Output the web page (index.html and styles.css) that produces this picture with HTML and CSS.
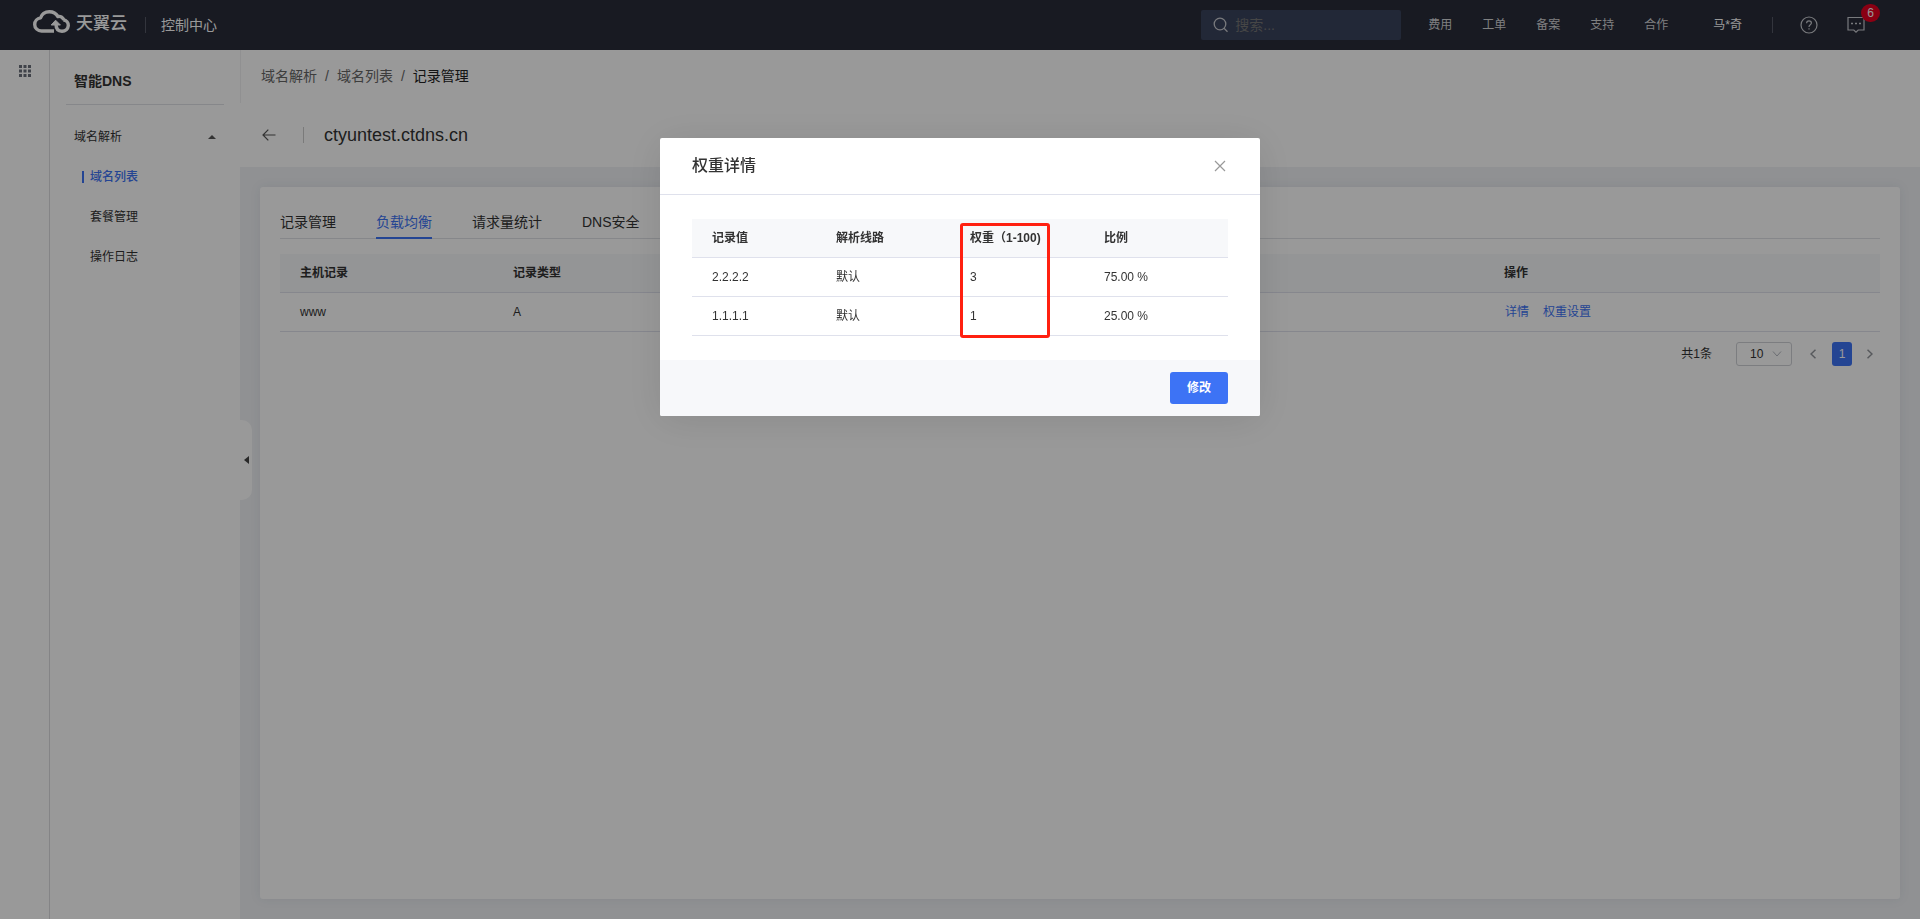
FILE: index.html
```html
<!DOCTYPE html>
<html lang="zh-CN">
<head>
<meta charset="utf-8">
<title>智能DNS - 记录管理</title>
<link rel="stylesheet" href="styles.css">
</head>
<body>
<div class="app">
  <header class="topbar">
    <a class="brand" href="#">
      <svg class="brand-logo" width="38" height="24" viewBox="0 0 38 24" fill="none" stroke="#fff" stroke-width="3.400" stroke-linejoin="round">
        <path d="M21 21H8.500C4.800 21 1.700 18.200 1.700 14.400C1.700 11 4.200 8.400 7.600 7.900C8.600 4.300 12 1.700 16.300 1.700C20.300 1.700 23.300 3.600 24.900 6.600C27.300 5.900 30 7.300 30.700 10"/>
        <path d="M30.300 9.800C33.500 10.300 35.500 12.800 35.300 15.600C35 18.900 32.300 21.200 29 21.200C25.300 21.200 23 18.600 23 14"/>
        <path d="M18.200 15L22.600 10.200L27.400 15Z" fill="#fff" stroke-width="1"/>
      </svg>
      <span class="brand-name">天翼云</span>
    </a>
    <a class="console-link" href="#">控制中心</a>
    <label class="search">
      <svg width="16" height="16" viewBox="0 0 16 16" fill="none" stroke="#c9cbd0" stroke-width="1.300"><circle cx="7" cy="7" r="5.800"/><path d="M11 11.300L14.500 14.700"/></svg>
      <input class="search-input" type="text" placeholder="搜索..." aria-label="搜索">
    </label>
    <nav class="topnav">
      <a href="#">费用</a><a href="#">工单</a><a href="#">备案</a><a href="#">支持</a><a href="#">合作</a>
    </nav>
    <a class="user" href="#">马*奇</a>
    <div class="tools">
      <button class="tool" type="button" aria-label="帮助">
        <svg width="18" height="18" viewBox="0 0 18 18" fill="none" stroke="#c9cbd0" stroke-width="1.200"><circle cx="9" cy="9" r="8"/><path d="M6.600 7.300C6.600 5.800 7.600 4.900 9 4.900S11.400 5.800 11.400 7.100C11.400 8.800 9 8.800 9 10.900"/><path d="M9 12.200V13.500"/></svg>
      </button>
      <button class="tool" type="button" aria-label="消息">
        <svg width="18" height="18" viewBox="0 0 18 18" fill="none" stroke="#c9cbd0" stroke-width="1.200"><path d="M1 1.500H17V14H11.200L9 16.200L6.800 14H1Z"/><path d="M4 7.500H6M8 7.500H10M12 7.500H14" stroke-width="1.600"/></svg>
        <span class="badge">6</span>
      </button>
    </div>
  </header>

  <div class="shell">
    <aside class="rail">
      <button class="rail-button" type="button" aria-label="产品">
        <svg width="12" height="12" viewBox="0 0 12 12" fill="#6b707c"><path d="M0 0h3v3H0zM4.500 0h3v3h-3zM9 0h3v3H9zM0 4.500h3v3H0zM4.500 4.500h3v3h-3zM9 4.500h3v3H9zM0 9h3v3H0zM4.500 9h3v3h-3zM9 9h3v3H9z"/></svg>
      </button>
    </aside>
    <aside class="sidebar">
      <h2 class="sidebar-title">智能DNS</h2>
      <button class="menu-group" type="button"><span>域名解析</span><svg width="8" height="4" viewBox="0 0 8 4" fill="#555"><path d="M0 4L4 0L8 4Z"/></svg></button>
      <nav class="menu">
        <a class="menu-item active" href="#">域名列表</a>
        <a class="menu-item" href="#">套餐管理</a>
        <a class="menu-item" href="#">操作日志</a>
      </nav>
      <button class="collapse" type="button" aria-label="收起"><svg width="5" height="8" viewBox="0 0 5 8" fill="#444"><path d="M5 0V8L0 4Z"/></svg></button>
    </aside>

    <main class="main">
      <div class="page-head">
        <nav class="crumbs"><a href="#">域名解析</a><span>/</span><a href="#">域名列表</a><span>/</span><b>记录管理</b></nav>
        <div class="title-row">
          <button class="back" type="button" aria-label="返回"><svg width="14" height="12" viewBox="0 0 14 12" fill="none" stroke="#555" stroke-width="1.200"><path d="M13.500 6H1M6.300 .600L1 6L6.300 11.400"/></svg></button>
          <h1 class="page-title">ctyuntest.ctdns.cn</h1>
        </div>
      </div>
      <div class="page-body">
        <section class="card">
          <nav class="tabs">
            <a class="tab" href="#">记录管理</a><a class="tab current" href="#">负载均衡</a><a class="tab" href="#">请求量统计</a><a class="tab" href="#">DNS安全</a>
          </nav>
          <table class="table records">
            <colgroup><col class="w-host"><col class="w-type"><col class="w-actions"></colgroup>
            <thead><tr><th>主机记录</th><th>记录类型</th><th>操作</th></tr></thead>
            <tbody><tr><td>www</td><td>A</td><td><span class="links"><a href="#">详情</a><a href="#">权重设置</a></span></td></tr></tbody>
          </table>
          <div class="pager">
            <span class="total">共1条</span>
            <span class="size">
              <select class="size-select" aria-label="每页条数"><option>10</option></select>
              <svg class="size-arrow" width="10" height="6" viewBox="0 0 10 6" fill="none" stroke="#b4b8c0"><path d="M1 .500L5 5L9 .500"/></svg>
            </span>
            <button class="step" type="button" aria-label="上一页"><svg width="6" height="10" viewBox="0 0 6 10" fill="none" stroke="#92959b" stroke-width="1.500"><path d="M5.500 .700L1 5L5.500 9.300"/></svg></button>
            <button class="page-number" type="button">1</button>
            <button class="step" type="button" aria-label="下一页"><svg width="6" height="10" viewBox="0 0 6 10" fill="none" stroke="#92959b" stroke-width="1.500"><path d="M.500 .700L5 5L.500 9.300"/></svg></button>
          </div>
        </section>
      </div>
    </main>
  </div>
</div>

<div class="overlay">
  <section class="dialog" role="dialog" aria-modal="true" aria-labelledby="dialog-title">
    <header class="dialog-head">
      <h2 class="dialog-title" id="dialog-title">权重详情</h2>
      <button class="close" type="button" aria-label="关闭"><svg width="12" height="12" viewBox="0 0 12 12" fill="none" stroke="#999" stroke-width="1.200"><path d="M1 1L11 11M11 1L1 11"/></svg></button>
    </header>
    <div class="dialog-body">
      <div class="weights-wrap">
        <table class="table weights">
          <colgroup><col class="w-value"><col class="w-mid"><col class="w-mid"><col></colgroup>
          <thead><tr><th>记录值</th><th>解析线路</th><th>权重（1-100)</th><th>比例</th></tr></thead>
          <tbody>
            <tr><td>2.2.2.2</td><td>默认</td><td>3</td><td>75.00 %</td></tr>
            <tr><td>1.1.1.1</td><td>默认</td><td>1</td><td>25.00 %</td></tr>
          </tbody>
        </table>
        <div class="marker"></div>
      </div>
    </div>
    <footer class="dialog-foot"><button class="primary" type="button">修改</button></footer>
  </section>
</div>
</body>
</html>
```
FILE: styles.css
```css
* { box-sizing: border-box; }

body {
  margin: 0;
  color: #333;
  font: 12px/18px "Liberation Sans", "Noto Sans CJK SC", sans-serif;
}

a { color: inherit; text-decoration: none; }
h1, h2 { margin: 0; }
svg { display: block; flex: none; }

button {
  display: flex;
  align-items: center;
  justify-content: center;
  padding: 0;
  border: 0;
  background: none;
  color: inherit;
  font: inherit;
}

.app {
  display: flex;
  flex-direction: column;
  min-height: 100vh;
  background: #f0f2f5;
}

/* Top bar */
.topbar {
  display: flex;
  align-items: center;
  height: 50px;
  padding: 0 55px 0 33px;
  background: #282c3a;
  color: #d4d5d8;
}

.brand {
  display: flex;
  align-items: flex-start;
  gap: 5px;
  height: 50px;
  padding-top: 10px;
  color: #fff;
}

.brand-name { font-size: 17px; line-height: 28px; font-weight: 500; }

.console-link {
  margin-left: 18px;
  padding-left: 15px;
  border-left: 1px solid #555966;
  color: #fff;
  font-size: 14px;
  line-height: 16px;
}

.search {
  display: flex;
  align-items: center;
  gap: 6px;
  width: 200px;
  height: 30px;
  margin-left: auto;
  padding: 0 12px;
  border-radius: 2px;
  background: #39435c;
}

.search-input {
  flex: 1;
  min-width: 0;
  padding: 0;
  border: 0;
  outline: 0;
  background: none;
  color: #fff;
  font: inherit;
  font-size: 14px;
}

.search-input::placeholder { color: #757575; opacity: 1; }

.topnav { display: flex; gap: 30px; margin-left: 27px; }
.user { margin-left: 45px; color: #fff; }

.tools {
  display: flex;
  gap: 29px;
  margin-left: 30px;
  padding-left: 27px;
  border-left: 1px solid #555966;
  height: 16px;
  align-items: center;
}

.tool { position: relative; }

.badge {
  position: absolute;
  left: 14px;
  bottom: 12px;
  width: 19px;
  height: 18px;
  border-radius: 9px;
  background: #e60020;
  color: #fff;
}

/* Navigation */
.shell { display: flex; flex: 1; }

.rail {
  width: 50px;
  flex: none;
  padding: 15px 0 0 19px;
  border-right: 1px solid #dcdde0;
  background: #fff;
}

.sidebar {
  position: relative;
  width: 190px;
  flex: none;
  padding: 0 16px;
  background: #fff;
}

.sidebar-title {
  padding: 20px 8px 12px;
  border-bottom: 1px solid #dfe1e6;
  font-size: 14px;
  line-height: 22px;
}

.menu-group {
  justify-content: space-between;
  width: 100%;
  height: 40px;
  margin-top: 12px;
  padding: 0 8px;
}

.menu { display: flex; flex-direction: column; }
.menu-item { padding-left: 24px; line-height: 40px; }

.menu-item.active {
  display: flex;
  align-items: center;
  padding-left: 16px;
  color: #3d73f5;
  font-weight: 500;
}

.menu-item.active::before {
  content: "";
  width: 2px;
  height: 12px;
  margin-right: 6px;
  background: #3d73f5;
}

.collapse {
  position: absolute;
  left: 100%;
  top: 370px;
  width: 12px;
  height: 80px;
  border-radius: 0 10px 10px 0;
  background: #fff;
}

/* Page */
.main { display: flex; flex: 1; flex-direction: column; min-width: 0; }
.page-head { background: #fff; }

.crumbs {
  display: flex;
  gap: 8px;
  height: 53px;
  padding-left: 20px;
  border-left: 1px solid #f0f0f2;
  color: #666;
  font-size: 14px;
  line-height: 53px;
}

.crumbs b { color: #222; font-weight: 400; }

.title-row { display: flex; align-items: center; height: 64px; padding: 0 22px; }

.page-title {
  margin-left: 27px;
  padding-left: 20px;
  border-left: 1px solid #ccc;
  font-size: 18px;
  line-height: 16px;
  font-weight: 400;
}

.page-body { display: flex; flex: 1; padding: 20px; }

.card {
  flex: 1;
  padding: 20px;
  border-radius: 3px;
  background: #fff;
  box-shadow: 0 0 12px rgba(40, 50, 100, .08);
}

.tabs {
  display: flex;
  gap: 40px;
  height: 32px;
  margin-bottom: 15px;
  border-bottom: 1px solid #dfe1e6;
  font-size: 14px;
  line-height: 30px;
}

.tab { height: 32px; }
.tab.current { border-bottom: 2px solid #3d73f5; color: #3d73f5; }

/* Tables */
.table { width: 100%; border-spacing: 0; table-layout: fixed; }

.table th,
.table td {
  height: 39px;
  padding: 0 20px;
  border-bottom: 1px solid #dfe1ec;
  text-align: left;
}

.table th { background: #f7f8fa; font-weight: 700; white-space: nowrap; }
.w-host { width: 213px; }
.w-actions { width: 396px; }
.w-value { width: 124px; }
.w-mid { width: 134px; }

.links { display: flex; gap: 14px; padding-left: 1px; color: #3d73f5; }

.pager { display: flex; align-items: center; justify-content: flex-end; margin-top: 10px; }
.total { margin-right: 24px; }
.size { position: relative; width: 56px; height: 24px; margin-right: 11px; }

.size-select {
  width: 100%;
  height: 100%;
  padding: 0 0 0 13px;
  border: 1px solid #cfd1d6;
  border-radius: 3px;
  appearance: none;
  background: #fff;
  color: inherit;
  font: inherit;
}

.size-arrow { position: absolute; right: 10px; top: 9px; pointer-events: none; }
.step { width: 20px; height: 24px; margin-right: 9px; }
.step:last-child { margin: 0 0 0 8px; }

.page-number {
  width: 20px;
  height: 24px;
  border-radius: 3px;
  background: #3d73f5;
  color: #fff;
}

/* Dialog */
.overlay {
  position: fixed;
  inset: 0;
  display: flex;
  align-items: flex-start;
  justify-content: center;
  padding-top: 138px;
  background: rgba(0, 0, 0, .4);
}

.dialog {
  width: 600px;
  overflow: hidden;
  border-radius: 2px;
  background: #fff;
  box-shadow: 0 4px 40px rgba(0, 0, 0, .1);
}

.dialog-head {
  display: flex;
  align-items: center;
  justify-content: space-between;
  height: 57px;
  padding: 0 34px 0 32px;
  border-bottom: 1px solid #dfe1ec;
}

.dialog-title { font-size: 16px; line-height: 24px; font-weight: 500; }
.dialog-body { padding: 24px 32px; }
.weights-wrap { position: relative; }

.marker {
  position: absolute;
  left: 268px;
  top: 4px;
  width: 90px;
  height: 115px;
  border: 3px solid #ff2010;
  border-radius: 3px;
}

.dialog-foot {
  display: flex;
  justify-content: flex-end;
  padding: 12px 32px;
  background: #f7f8fa;
}

.primary {
  width: 58px;
  height: 32px;
  border-radius: 3px;
  background: #3d73f5;
  color: #fff;
  font-weight: 700;
}
```
